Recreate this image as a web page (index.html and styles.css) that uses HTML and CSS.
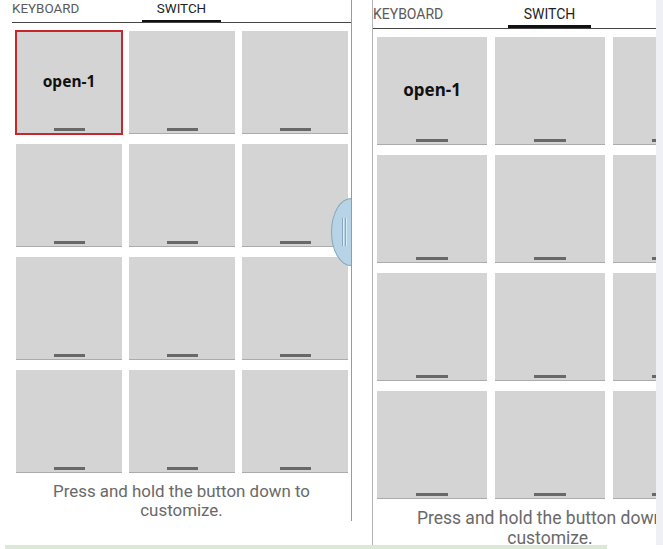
FILE: index.html
```html
<!DOCTYPE html>
<html lang="en">
	<head>
		<meta charset="UTF-8" />
		<meta name="viewport" content="width=device-width, initial-scale=1.0" />
		<title>Switch keys</title>

		<link rel="stylesheet" href="styles.css">
	</head>
	<body>
		<div class="screen">
			<section class="phone small">
				<div class="tabs">
					<span class="tab">KEYBOARD</span>
					<span class="tab active">SWITCH</span>
				</div>

				<div class="keys">
					<div class="key selected"><span class="label">open-1</span><i class="bar"></i></div>
					<div class="key"><span class="label"></span><i class="bar"></i></div>
					<div class="key"><span class="label"></span><i class="bar"></i></div>
					<div class="key"><span class="label"></span><i class="bar"></i></div>
					<div class="key"><span class="label"></span><i class="bar"></i></div>
					<div class="key"><span class="label"></span><i class="bar"></i></div>
					<div class="key"><span class="label"></span><i class="bar"></i></div>
					<div class="key"><span class="label"></span><i class="bar"></i></div>
					<div class="key"><span class="label"></span><i class="bar"></i></div>
					<div class="key"><span class="label"></span><i class="bar"></i></div>
					<div class="key"><span class="label"></span><i class="bar"></i></div>
					<div class="key"><span class="label"></span><i class="bar"></i></div>
				</div>

				<p class="hint">Press and hold the button down to customize.</p>

				<span class="handle"></span>
			</section>

			<section class="phone large">
				<div class="tabs">
					<span class="tab">KEYBOARD</span>
					<span class="tab active">SWITCH</span>
				</div>

				<div class="keys">
					<div class="key"><span class="label">open-1</span><i class="bar"></i></div>
					<div class="key"><span class="label"></span><i class="bar"></i></div>
					<div class="key"><span class="label"></span><i class="bar"></i></div>
					<div class="key"><span class="label"></span><i class="bar"></i></div>
					<div class="key"><span class="label"></span><i class="bar"></i></div>
					<div class="key"><span class="label"></span><i class="bar"></i></div>
					<div class="key"><span class="label"></span><i class="bar"></i></div>
					<div class="key"><span class="label"></span><i class="bar"></i></div>
					<div class="key"><span class="label"></span><i class="bar"></i></div>
					<div class="key"><span class="label"></span><i class="bar"></i></div>
					<div class="key"><span class="label"></span><i class="bar"></i></div>
					<div class="key"><span class="label"></span><i class="bar"></i></div>
				</div>

				<p class="hint">Press and hold the button down to customize.</p>
			</section>

			<div class="edge"></div>
		</div>

		<div class="taskbar"></div>
	</body>
</html>
```

FILE: styles.css
```css
* {
	padding: 0;
	margin: 0;
	box-sizing: border-box;
}

body {
	width: 663px;
	height: 549px;
	overflow: hidden;
	background-color: #fff;
	font-family: Roboto, "Liberation Sans", sans-serif;
}

.screen {
	display: flex;
	align-items: flex-start;
	height: 545px;
}

/* phone panel, sizes set per variant */
.phone {
	position: relative;
	flex: none;
	overflow: hidden;
}
.phone.small {
	width: 352px;
	height: 521px;
	padding-left: 12px;
	border-right: 1px solid #9a9a9a;
	overflow: visible;
}
.phone.large {
	width: 284px;
	height: 545px;
	margin-left: 20px;
	padding-top: 5px;
	border-left: 1px solid #b4b4b4;
}

.tabs {
	display: flex;
	border-bottom: 1px solid #444;
}
.tab {
	display: block;
	color: #5a5a5a;
	white-space: nowrap;
}
.tab.active {
	color: #1e1e1e;
	text-align: center;
	border-bottom: 2px solid #111;
}
.small .tabs {
	height: 23px;
}
.small .tab {
	width: 130px;
	height: 22px;
	font-size: 13.4px;
	line-height: 18px;
}
.small .tab.active {
	width: 79px;
}
.large .tabs {
	height: 24px;
	width: 354px;
}
.large .tab {
	width: 135px;
	height: 23px;
	font-size: 14px;
	line-height: 19px;
}
.large .tab.active {
	width: 83px;
	border-bottom-width: 3px;
}

.keys {
	display: grid;
}
.small .keys {
	grid-template-columns: repeat(3, 106px);
	grid-auto-rows: 103px;
	gap: 10px 7px;
	padding: 8px 0 0 4px;
}
.large .keys {
	grid-template-columns: repeat(3, 110px);
	grid-auto-rows: 108px;
	gap: 10px 8px;
	padding: 8px 0 0 4px;
}

.key {
	display: flex;
	flex-direction: column;
	background-color: #d4d4d4;
	border-bottom: 1px solid #ababab;
}
.key.selected {
	outline: 2px solid #c8262d;
	outline-offset: -1px;
}
.label {
	flex: 1;
	display: flex;
	align-items: center;
	justify-content: center;
	font-family: "Noto Sans", "DejaVu Sans", sans-serif;
	font-weight: bold;
	color: #111;
}
.small .label {
	font-size: 15.5px;
	padding-top: 2px;
}
.large .label {
	font-size: 17px;
	padding-top: 2px;
}
.bar {
	display: block;
	height: 3px;
	margin: 0 auto 2px;
	background-color: #686868;
}
.small .bar {
	width: 31px;
}
.large .bar {
	width: 32px;
}

.hint {
	text-align: center;
	color: #696969;
}
.small .hint {
	margin-top: 9px;
	padding: 0 26px;
	font-size: 16.9px;
	line-height: 19px;
}
.large .hint {
	width: 354px;
	margin-top: 9px;
	padding: 0 28px;
	font-size: 17.5px;
	line-height: 20px;
}

/* pull tab on the side of the first panel */
.handle {
	position: absolute;
	left: 331px;
	top: 198px;
	width: 20px;
	height: 68px;
	border: 1px solid #87a7bb;
	border-right: none;
	border-radius: 20px 0 0 20px / 34px 0 0 34px;
	background-color: #b6d4e5;
}
.handle::before,
.handle::after {
	content: "";
	position: absolute;
	top: 19px;
	width: 1px;
	height: 28px;
	background-color: #86a9bf;
	box-shadow: 1px 0 0 #dcebf3;
}
.handle::before {
	left: 10px;
}
.handle::after {
	left: 13px;
}

.edge {
	flex: 1;
	align-self: stretch;
	background-color: #eef0f5;
}

.taskbar {
	width: 602px;
	height: 4px;
	margin-left: 5px;
	background-color: #dce8d5;
}
```
